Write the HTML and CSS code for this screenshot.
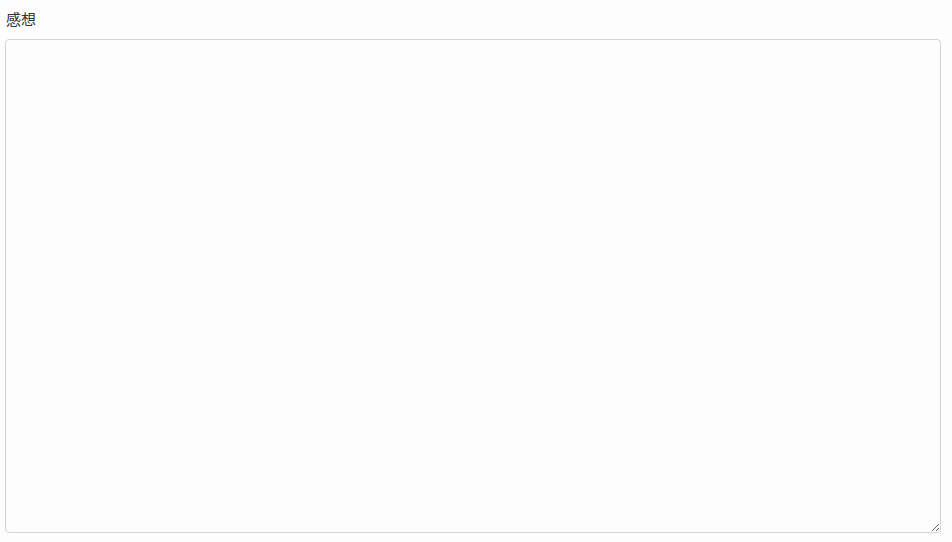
FILE: index.html
```html
<!DOCTYPE html>
<html>
	<head>
		<meta charset="UTF-8"/>
		<title>感想</title>
		<link rel="stylesheet" href="styles.css">
	</head>
	<body>
		<div class="Form">
			<label class="Label" for="kanso">感想</label>
			<textarea id="kanso" class="Memo"></textarea>
		</div>
	</body>
</html>
```

FILE: styles.css
```css
* {
	margin: 0;
	padding: 0;
	box-sizing: border-box;
}
html, body {
	background: #fdfdfd;
	font-family: "Noto Sans CJK JP", "Noto Sans", sans-serif;
	color: #333;
}
.Form {
	display: flex;
	flex-direction: column;
	padding: 8px 11px 0 5px;
}
.Label {
	font-size: 15px;
	line-height: 22px;
	padding-left: 1px;
	margin-bottom: 9px;
}
.Memo {
	width: 100%;
	height: 494px;
	border: 1px solid #d4d4d4;
	border-radius: 4px;
	background: #fdfdfd;
	resize: vertical;
	font: 14px "Noto Sans CJK JP", sans-serif;
	padding: 6px 8px;
}
```
